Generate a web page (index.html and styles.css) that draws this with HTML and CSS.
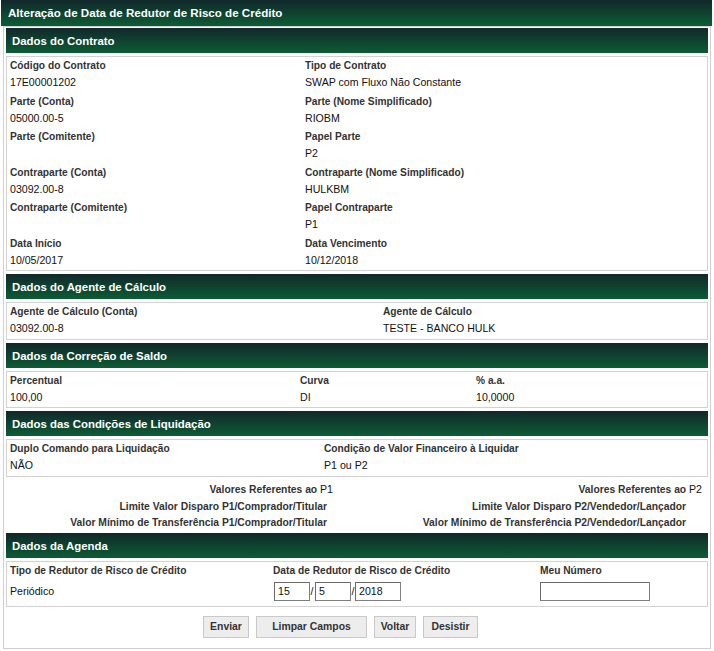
FILE: index.html
```html
<!DOCTYPE html>
<html lang="pt-BR">
<head>
<meta charset="utf-8">
<title>Alteração de Data de Redutor de Risco de Crédito</title>
<link rel="stylesheet" href="styles.css">
</head>
<body>
<div class="title">Alteração de Data de Redutor de Risco de Crédito</div>
<div class="frame">
  <div class="sec">Dados do Contrato</div>
  <div class="box cols-contrato">
    <div class="field"><div class="lbl">Código do Contrato</div><div class="val">17E00001202</div></div>
    <div class="field"><div class="lbl">Tipo de Contrato</div><div class="val">SWAP com Fluxo Não Constante</div></div>
    <div class="field"><div class="lbl">Parte (Conta)</div><div class="val">05000.00-5</div></div>
    <div class="field"><div class="lbl">Parte (Nome Simplificado)</div><div class="val">RIOBM</div></div>
    <div class="field"><div class="lbl">Parte (Comitente)</div><div class="val"></div></div>
    <div class="field"><div class="lbl">Papel Parte</div><div class="val">P2</div></div>
    <div class="field"><div class="lbl">Contraparte (Conta)</div><div class="val">03092.00-8</div></div>
    <div class="field"><div class="lbl">Contraparte (Nome Simplificado)</div><div class="val">HULKBM</div></div>
    <div class="field"><div class="lbl">Contraparte (Comitente)</div><div class="val"></div></div>
    <div class="field"><div class="lbl">Papel Contraparte</div><div class="val">P1</div></div>
    <div class="field"><div class="lbl">Data Início</div><div class="val">10/05/2017</div></div>
    <div class="field"><div class="lbl">Data Vencimento</div><div class="val">10/12/2018</div></div>
  </div>

  <div class="sec">Dados do Agente de Cálculo</div>
  <div class="box cols-agente">
    <div class="field"><div class="lbl">Agente de Cálculo (Conta)</div><div class="val">03092.00-8</div></div>
    <div class="field"><div class="lbl">Agente de Cálculo</div><div class="val">TESTE - BANCO HULK</div></div>
  </div>

  <div class="sec">Dados da Correção de Saldo</div>
  <div class="box cols-saldo">
    <div class="field"><div class="lbl">Percentual</div><div class="val">100,00</div></div>
    <div class="field"><div class="lbl">Curva</div><div class="val">DI</div></div>
    <div class="field"><div class="lbl">% a.a.</div><div class="val">10,0000</div></div>
  </div>

  <div class="sec">Dados das Condições de Liquidação</div>
  <div class="box cols-liq">
    <div class="field"><div class="lbl">Duplo Comando para Liquidação</div><div class="val">NÃO</div></div>
    <div class="field"><div class="lbl">Condição de Valor Financeiro à Liquidar</div><div class="val">P1 ou P2</div></div>
  </div>

  <div class="valores">
    <div class="vh vh1">Valores Referentes ao <span class="pn">P1</span></div>
    <div class="vh vh2">Valores Referentes ao <span class="pn">P2</span></div>
    <div class="vl vl1">Limite Valor Disparo P1/Comprador/Titular</div>
    <div class="vl vl2">Limite Valor Disparo P2/Vendedor/Lançador</div>
    <div class="vl vl1">Valor Mínimo de Transferência P1/Comprador/Titular</div>
    <div class="vl vl2">Valor Mínimo de Transferência P2/Vendedor/Lançador</div>
  </div>

  <div class="sec">Dados da Agenda</div>
  <div class="box cols-agenda">
    <div class="field agenda-field"><div class="lbl">Tipo de Redutor de Risco de Crédito</div><div class="ctl">Periódico</div></div>
    <div class="field agenda-field"><div class="lbl">Data de Redutor de Risco de Crédito</div>
      <div class="ctl">
        <input class="inp inp-dm" type="text" value="15"><span class="slash">/</span><input class="inp inp-dm" type="text" value="5"><span class="slash">/</span><input class="inp inp-y" type="text" value="2018">
      </div>
    </div>
    <div class="field agenda-field"><div class="lbl">Meu Número</div><div class="ctl"><input class="inp inp-num" type="text" value=""></div></div>
  </div>

  <div class="actions">
    <button class="btn btn-enviar" type="button">Enviar</button>
    <button class="btn btn-limpar" type="button">Limpar Campos</button>
    <button class="btn btn-voltar" type="button">Voltar</button>
    <button class="btn btn-desistir" type="button">Desistir</button>
  </div>
</div>
</body>
</html>
```

FILE: styles.css
```css
* { box-sizing: border-box; }

body {
  margin: 0;
  background: #fff;
  font-family: "Liberation Sans", Arial, sans-serif;
  color: #111;
}

.title {
  width: 711px;
  margin-left: 1px;
  height: 26px;
  padding: 1px 0 0 7px;
  line-height: 23px;
  font-size: 11.6px;
  font-weight: bold;
  color: #fff;
  background: linear-gradient(#11282a, #0c5c35);
}

.frame {
  width: 708px;
  margin-left: 3px;
  border: 1px solid #cfcfcf;
  padding: 1px 2px 0;
}

.sec {
  height: 25px;
  padding: 2px 0 0 6px;
  line-height: 23px;
  font-size: 11.4px;
  font-weight: bold;
  color: #fff;
  background: linear-gradient(#11282a, #0c5c35);
  margin-bottom: 3px;
}

.box {
  display: grid;
  border: 1px solid #d2d2d2;
  padding: 0 3px;
  margin-bottom: 3px;
}

.cols-contrato { grid-template-columns: 295px 1fr; }
.cols-agente { grid-template-columns: 373px 1fr; }
.cols-saldo { grid-template-columns: 290px 176px 1fr; }
.cols-liq { grid-template-columns: 314px 1fr; }
.cols-agenda { grid-template-columns: 263px 267px 1fr; }

.field { padding: 1px 0 2.5px; }

.lbl {
  height: 16px;
  line-height: 16px;
  font-size: 10.2px;
  font-weight: bold;
  color: #333;
  white-space: nowrap;
}

.val {
  height: 16px;
  line-height: 16px;
  font-size: 10.6px;
  color: #111;
  white-space: nowrap;
}

.valores {
  display: grid;
  grid-template-columns: 321px 6px 353px 16px;
  grid-template-rows: 18px 16px 16px;
  padding-top: 1px;
  margin-bottom: 2px;
  font-size: 10.3px;
  font-weight: bold;
  color: #333;
  line-height: 16px;
}

.vh, .vl { text-align: right; white-space: nowrap; }
.vh1 { grid-column: 1 / 3; }
.vh2 { grid-column: 3 / 5; }
.vl1 { grid-column: 1; }
.vl2 { grid-column: 3; }
.pn { font-weight: normal; color: #111; font-size: 10.6px; }

.agenda-field { padding-bottom: 5px; }

.ctl {
  display: flex;
  align-items: center;
  height: 19px;
  margin-top: 3px;
  font-size: 10.6px;
  color: #111;
}

.inp {
  height: 19px;
  border: 1px solid #7f7f7f;
  border-top-color: #6a6a6a;
  border-left-color: #6a6a6a;
  padding: 0 3px;
  margin: 0;
  font-family: "Liberation Sans", Arial, sans-serif;
  font-size: 10.6px;
  color: #111;
  background: #fff;
}

.inp-dm { width: 36px; margin-left: 1px; }
.inp-y { width: 46px; }
.inp-num { width: 110px; }

.slash {
  width: 4px;
  text-align: center;
  font-size: 10.6px;
}

.actions {
  display: flex;
  gap: 7px;
  padding: 6px 0 10px 197px;
}

.btn {
  height: 22px;
  padding: 0;
  border: 1px solid #c9c9c9;
  background: #ededed;
  font-family: "Liberation Sans", Arial, sans-serif;
  font-size: 10.4px;
  font-weight: bold;
  color: #333;
}

.btn-enviar { width: 46px; }
.btn-limpar { width: 111px; }
.btn-voltar { width: 42px; }
.btn-desistir { width: 55px; }
```
